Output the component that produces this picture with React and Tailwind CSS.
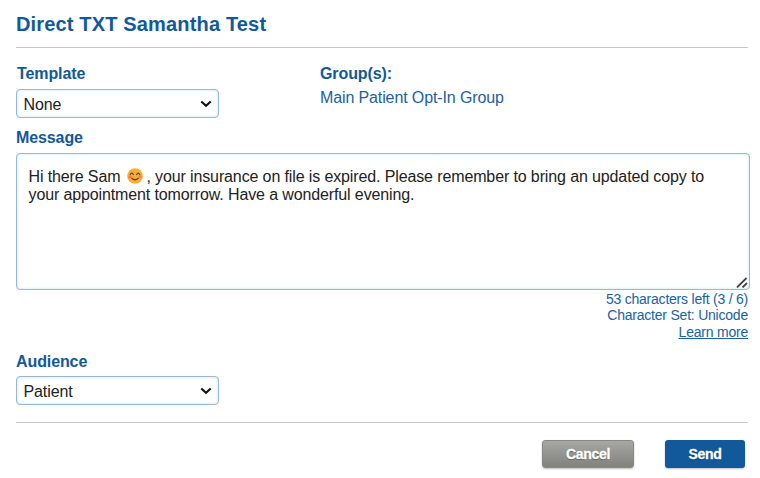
import clsx from "clsx";

const messageText = {
  before: "Hi there Sam",
  after: ", your insurance on file is expired. Please remember to bring an updated copy to",
  rest: "your appointment tomorrow. Have a wonderful evening.",
};

function Label({ children, className }) {
  return (
    <div className={clsx("text-[16px] leading-[20px] font-bold tracking-[-0.1px] text-[#11599b]", className)}>{children}</div>
  );
}

function SelectBox({ value }) {
  return (
    <button
      type="button"
      className="flex h-[29px] w-[203px] items-center justify-between rounded-[4px] border border-[#94b9dc] bg-white pr-[6px] pl-[6.5px] text-[16px] leading-[18px] tracking-[-0.1px] text-[#222] shadow-[inset_0_0_3px_#c5dcf2]"
    >
      <span className="relative top-px">{value}</span>
      <svg width="12" height="8" viewBox="0 0 12 8" fill="none" stroke="#111" strokeWidth="2.1">
        <path d="M1.3 1.5 L6 5.8 L10.7 1.5" />
      </svg>
    </button>
  );
}

function SmileEmoji() {
  return (
    <svg className="mr-[3px] ml-[7px] inline-block align-[-2px]" width="16" height="16" viewBox="0 0 16 16">
      <circle cx="8" cy="8" r="7.8" fill="#fcae32" />
      <circle cx="2.9" cy="8.8" r="1.6" fill="#ff7a43" />
      <circle cx="13.1" cy="8.8" r="1.6" fill="#ff7a43" />
      <g fill="none" stroke="#5d4037" strokeWidth="1.2" strokeLinecap="round">
        <path d="M3.3 6.5 Q4.8 3.8 6.3 6.5" />
        <path d="M9.7 6.5 Q11.2 3.8 12.7 6.5" />
        <path d="M4.8 10.3 Q8 13.2 11.2 10.3" />
      </g>
    </svg>
  );
}

export default function App() {
  return (
    <main className="h-[478px] w-[760px] overflow-hidden bg-white pt-[12px] pr-[10px] pl-[16px] font-['Liberation_Sans',Arial,sans-serif]">
      <h1 className="h-[35px] text-[20px] leading-[24px] font-bold tracking-[0.16px] text-[#11599b]">
        Direct TXT Samantha Test
      </h1>
      <hr className="w-[732px] border-[#c8c8c8]" />

      <section className="mt-[16px] flex h-[54px]">
        <div className="w-[304px]">
          <Label className="mb-[5px] pl-px">Template</Label>
          <SelectBox value="None" />
        </div>
        <div>
          <Label>Group(s):</Label>
          <div className="mt-[5px] text-[16px] leading-[18px] tracking-[-0.12px] text-[#1c62a2]">Main Patient Opt-In Group</div>
        </div>
      </section>

      <section className="mt-[10px]">
        <Label>Message</Label>
        <div className="relative mt-[5px] h-[137px] rounded-[4px] border border-[#94b9dc] pt-[14px] pl-[11.5px] text-[16px] leading-[18px] tracking-[-0.122px] whitespace-nowrap text-[#222] shadow-[inset_0_0_3px_#c5dcf2]">
          <p className="h-[18px]">
            {messageText.before}
            <SmileEmoji />
            {messageText.after}
          </p>
          <p>{messageText.rest}</p>
          <svg className="absolute right-[1px] bottom-[1px]" width="12" height="11" viewBox="0 0 12 11" stroke="#444" strokeWidth="1.8">
            <path d="M1 10.5 L10.5 1 M6.5 10.5 L11 6" />
          </svg>
        </div>
        <div className="mt-[1px] pr-[2px] text-right text-[14px] leading-[16.5px] tracking-[-0.22px] text-[#1c62a2]">
          <p>53 characters left (3 / 6)</p>
          <p className="relative -top-px">Character Set: Unicode</p>
          <p>
            <a href="#" className="underline">Learn more</a>
          </p>
        </div>
      </section>

      <section className="mt-[11.5px]">
        <Label className="mb-[4px]">Audience</Label>
        <SelectBox value="Patient" />
      </section>

      <hr className="mt-[17px] w-[732px] border-[#c8c8c8]" />

      <footer className="mt-[17px] flex justify-end gap-[31px] pr-[5px] text-[14px] font-bold tracking-[-0.3px] text-white">
        <button
          type="button"
          className="h-[28px] w-[92px] rounded-[3px] border border-[#888984] bg-linear-to-b from-[#a7a8a5] to-[#81827c] shadow-[0_1px_2px_rgba(0,0,0,0.25)] [-webkit-text-stroke:0.3px_white] text-shadow-[0_1px_1px_rgba(0,0,0,0.4)]"
        >
          Cancel
        </button>
        <button
          type="button"
          className="h-[28px] w-[80px] rounded-[3px] bg-[#11599b] shadow-[0_1px_2px_rgba(0,0,0,0.25)] [-webkit-text-stroke:0.3px_white] text-shadow-[0_1px_1px_rgba(0,0,0,0.4)]"
        >
          Send
        </button>
      </footer>
    </main>
  );
}
